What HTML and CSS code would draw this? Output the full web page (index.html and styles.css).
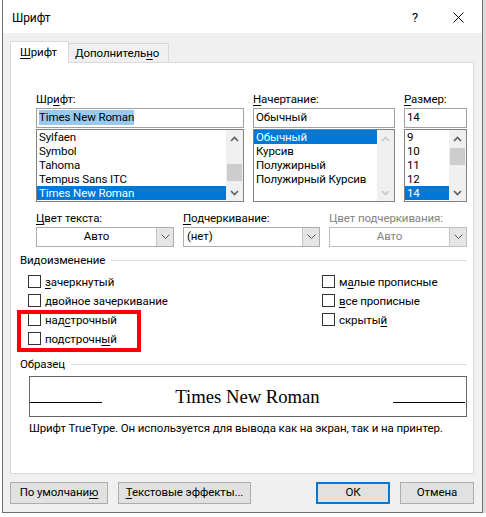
FILE: index.html
```html
<!DOCTYPE html>
<html lang="ru">
<head>
<meta charset="utf-8">
<title>Шрифт</title>
<link rel="stylesheet" href="styles.css">
</head>
<body>
<div class="dialog">
  <div class="titlebar">
    <span class="title">Шрифт</span>
    <span class="help">?</span>
    <svg class="close" width="11" height="11" viewBox="0 0 11 11"><path d="M0.5 0.5L10.5 10.5M10.5 0.5L0.5 10.5" stroke="#000" stroke-width="1" fill="none"/></svg>
  </div>

  <div class="client">
    <div class="tabs">
      <div class="tab tab-active"><u>Ш</u>рифт</div>
      <div class="tab">Дополнитель<u>н</u>о</div>
    </div>

    <div class="panel">
      <!-- font / style / size pickers -->
      <div class="pickers">
        <div class="picker">
          <div class="lbl">Шр<u>и</u>фт:</div>
          <div class="field"><span class="field-sel">Times New Roman</span></div>
          <div class="list">
            <div class="items">
              <div class="item">Sylfaen</div>
              <div class="item">Symbol</div>
              <div class="item">Tahoma</div>
              <div class="item">Tempus Sans ITC</div>
              <div class="item item-sel">Times New Roman</div>
            </div>
            <div class="sbar">
              <div class="sbtn"><svg width="9" height="6" viewBox="0 0 9 6"><path d="M1 5L4.5 1.5L8 5" stroke="#606060" stroke-width="1.7" fill="none"/></svg></div>
              <div class="strack"><div class="thumb thumb-font"></div></div>
              <div class="sbtn"><svg width="9" height="6" viewBox="0 0 9 6"><path d="M1 1L4.5 4.5L8 1" stroke="#606060" stroke-width="1.7" fill="none"/></svg></div>
            </div>
          </div>
        </div>

        <div class="picker">
          <div class="lbl"><u>Н</u>ачертание:</div>
          <div class="field">Обычный</div>
          <div class="list">
            <div class="items">
              <div class="item item-sel">Обычный</div>
              <div class="item">Курсив</div>
              <div class="item">Полужирный</div>
              <div class="item">Полужирный Курсив</div>
            </div>
            <div class="sbar">
              <div class="sbtn"><svg width="9" height="6" viewBox="0 0 9 6"><path d="M1 5L4.5 1.5L8 5" stroke="#c8c8c8" stroke-width="1.7" fill="none"/></svg></div>
              <div class="strack"></div>
              <div class="sbtn"><svg width="9" height="6" viewBox="0 0 9 6"><path d="M1 1L4.5 4.5L8 1" stroke="#c8c8c8" stroke-width="1.7" fill="none"/></svg></div>
            </div>
          </div>
        </div>

        <div class="picker">
          <div class="lbl"><u>Р</u>азмер:</div>
          <div class="field">14</div>
          <div class="list">
            <div class="items">
              <div class="item">9</div>
              <div class="item">10</div>
              <div class="item">11</div>
              <div class="item">12</div>
              <div class="item item-sel">14</div>
            </div>
            <div class="sbar">
              <div class="sbtn"><svg width="9" height="6" viewBox="0 0 9 6"><path d="M1 5L4.5 1.5L8 5" stroke="#606060" stroke-width="1.7" fill="none"/></svg></div>
              <div class="strack"><div class="thumb thumb-size"></div></div>
              <div class="sbtn"><svg width="9" height="6" viewBox="0 0 9 6"><path d="M1 1L4.5 4.5L8 1" stroke="#606060" stroke-width="1.7" fill="none"/></svg></div>
            </div>
          </div>
        </div>
      </div>

      <!-- colour and underline combos -->
      <div class="combos">
        <div class="picker">
          <div class="lbl"><u>Ц</u>вет текста:</div>
          <div class="combo">
            <span class="combo-val combo-center">Авто</span>
            <span class="combo-btn"><svg width="9" height="6" viewBox="0 0 9 6"><path d="M0.5 0.5L4.5 4.5L8.5 0.5" stroke="#555" stroke-width="1" fill="none"/></svg></span>
          </div>
        </div>
        <div class="picker">
          <div class="lbl"><u>П</u>одчеркивание:</div>
          <div class="combo">
            <span class="combo-val">(нет)</span>
            <span class="combo-btn"><svg width="9" height="6" viewBox="0 0 9 6"><path d="M0.5 0.5L4.5 4.5L8.5 0.5" stroke="#555" stroke-width="1" fill="none"/></svg></span>
          </div>
        </div>
        <div class="picker picker-off">
          <div class="lbl">Цвет подчеркивания:</div>
          <div class="combo">
            <span class="combo-val combo-center">Авто</span>
            <span class="combo-btn"><svg width="9" height="6" viewBox="0 0 9 6"><path d="M0.5 0.5L4.5 4.5L8.5 0.5" stroke="#555" stroke-width="1" fill="none"/></svg></span>
          </div>
        </div>
      </div>

      <div class="group-title">Видоизменение</div>
      <div class="effects">
        <div class="effects-col">
          <div class="check"><span class="box"></span><span><u>з</u>ачеркнутый</span></div>
          <div class="check"><span class="box"></span><span>двойное зачеркивание</span></div>
          <div class="check"><span class="box"></span><span>над<u>с</u>трочный</span></div>
          <div class="check"><span class="box"></span><span>подстрочн<u>ы</u>й</span></div>
        </div>
        <div class="effects-col">
          <div class="check"><span class="box"></span><span>м<u>а</u>лые прописные</span></div>
          <div class="check"><span class="box"></span><span><u>в</u>се прописные</span></div>
          <div class="check"><span class="box"></span><span>скрыты<u>й</u></span></div>
        </div>
        <div class="mark"></div>
      </div>

      <div class="group-title group-sample">Образец</div>
      <div class="sample">
        <div class="sample-line">
          <span class="rule"></span>
          <span class="sample-text">Times New Roman</span>
          <span class="rule"></span>
        </div>
      </div>
      <div class="note">Шрифт TrueType. Он используется для вывода как на экран, так и на принтер.</div>
    </div>

    <div class="buttons">
      <div class="btn btn-default">По умолчани<u>ю</u></div>
      <div class="btn btn-effects"><u>Т</u>екстовые эффекты...</div>
      <div class="btn btn-ok">ОК</div>
      <div class="btn btn-cancel">Отмена</div>
    </div>
  </div>
</div>
</body>
</html>
```

FILE: styles.css
```css
* { box-sizing: border-box; }

html, body { margin: 0; padding: 0; }

body {
  width: 486px;
  height: 517px;
  overflow: hidden;
  background: #fff;
  color: #000;
  font-family: Roboto, "Segoe UI", "Noto Sans", sans-serif;
  font-size: 11.5px;
  letter-spacing: -0.1px;
  line-height: 16px;
}

u { text-decoration: underline; text-underline-offset: 2px; }

/* window frame */
.dialog {
  margin-left: 2px;
  width: 481px;
  height: 513px;
  border: 1px solid #707070;
  border-top: none;
  background: #f0f0f0;
  display: flex;
  flex-direction: column;
  box-shadow: 4px 0 0 #dcdcdc;
}

.titlebar {
  height: 33px;
  background: #fff;
  display: flex;
  align-items: center;
  padding: 2px 18px 0 9px;
  flex: none;
}
.title { flex: 1; font-size: 12px; }
.help { font-size: 13px; margin-right: 35px; }
.close { display: block; }

.client {
  flex: 1;
  padding: 8px 8px 0 7px;
  display: flex;
  flex-direction: column;
}

/* tabs */
.tabs {
  display: flex;
  align-items: flex-end;
  height: 21px;
}
.tab {
  height: 20px;
  margin-bottom: -1px;
  padding: 1px 6px 0 6px;
  border: 1px solid #d9d9d9;
  background: #f0f0f0;
  line-height: 16px;
}
.tab + .tab { margin-left: -1px; width: 101px; }
.tab-active {
  position: relative;
  z-index: 1;
  height: 22px;
  width: 59px;
  padding: 2px 9px 0 9px;
  background: #fff;
  border-bottom: none;
}

/* tab page */
.panel {
  position: relative;
  width: 464px;
  height: 412px;
  border: 1px solid #d9d9d9;
  background: #fff;
  padding: 28px 6px 0 9px;
}

.pickers,
.combos {
  display: grid;
  column-gap: 9px;
  margin-left: 16px;
}
.pickers { grid-template-columns: 208px 142px 63px; }
.combos { grid-template-columns: 138px 137px 138px; margin-top: 8px; }

.picker { display: flex; flex-direction: column; }
.lbl { height: 16px; line-height: 16px; margin-bottom: 1px; }

.field {
  height: 20px;
  border: 1px solid #a0a0a0;
  padding: 0 2px;
  line-height: 17px;
}
.field-sel { background: #99c9ef; padding: 0 0 1px; }

.list {
  margin-top: 1px;
  height: 73px;
  border: 1px solid #828282;
  display: flex;
}
.items { flex: 1; min-width: 0; }
.item {
  height: 14px;
  line-height: 14px;
  padding-left: 2px;
  white-space: nowrap;
}
.item-sel { background: #0078d7; color: #fff; }

.sbar {
  width: 17px;
  height: 71px;
  background: #f0f0f0;
  display: flex;
  flex-direction: column;
}
.sbtn {
  height: 17px;
  display: flex;
  align-items: center;
  justify-content: center;
  flex: none;
}
.sbtn svg { display: block; }
.strack { flex: 1; display: flex; flex-direction: column; }
.thumb { height: 17px; margin: 0 1px; background: #cdcdcd; }
.thumb-font { margin-top: 17px; }
.thumb-size { margin-top: 1px; }

/* combo boxes */
.combo {
  height: 20px;
  border: 1px solid #adadad;
  background: #fff;
  display: flex;
}
.combo-val { flex: 1; padding-left: 3px; line-height: 17px; }
.combo-center { text-align: center; padding-left: 0; }
.combo-btn {
  width: 17px;
  background: #e5e5e5;
  border-left: 1px solid #c4c4c4;
  display: flex;
  align-items: center;
  justify-content: center;
}
.picker-off .lbl,
.picker-off .combo-val { color: #838383; }
.picker-off .combo { border-color: #bfbfbf; }

/* group headers with a rule */
.group-title {
  margin-top: 5px;
  height: 16px;
  display: flex;
  align-items: center;
  gap: 6px;
}
.group-title::after {
  content: "";
  flex: 1;
  border-top: 1px solid #dcdcdc;
}
.group-sample { margin-top: 8px; }

/* effect check boxes */
.effects {
  position: relative;
  margin: 4px 0 0 8px;
  display: grid;
  grid-template-columns: 294px 1fr;
}
.check {
  height: 19px;
  display: flex;
  align-items: center;
  gap: 4px;
}
.box {
  width: 13px;
  height: 13px;
  border: 1px solid #333;
  background: #fff;
  flex: none;
}
.mark {
  position: absolute;
  left: -11px;
  top: 38px;
  width: 124px;
  height: 42px;
  border: 4px solid #ff0000;
}

/* font sample */
.sample {
  margin: 4px 0 0 9px;
  height: 41px;
  border: 1px solid #646464;
  display: flex;
  align-items: center;
  padding-right: 1px;
}
.sample-line {
  width: 100%;
  display: flex;
  align-items: baseline;
}
.rule {
  width: 72px;
  height: 0;
  border-top: 1px solid #000;
  flex: none;
}
.sample-text {
  flex: 1;
  text-align: center;
  font-family: "Liberation Serif", "Times New Roman", serif;
  font-size: 18.67px;
  letter-spacing: 0;
  line-height: 21px;
}
.note { margin: 3px 0 0 9px; white-space: nowrap; }

/* bottom buttons */
.buttons {
  margin-top: 8px;
  display: flex;
  gap: 10px;
}
.btn {
  height: 22px;
  border: 1px solid #adadad;
  background: #e1e1e1;
  text-align: center;
  line-height: 19px;
}
.btn-default { width: 98px; }
.btn-effects { width: 133px; }
.btn-ok { width: 74px; margin-left: auto; border: 2px solid #0078d7; line-height: 17px; }
.btn-cancel { width: 74px; }
```
